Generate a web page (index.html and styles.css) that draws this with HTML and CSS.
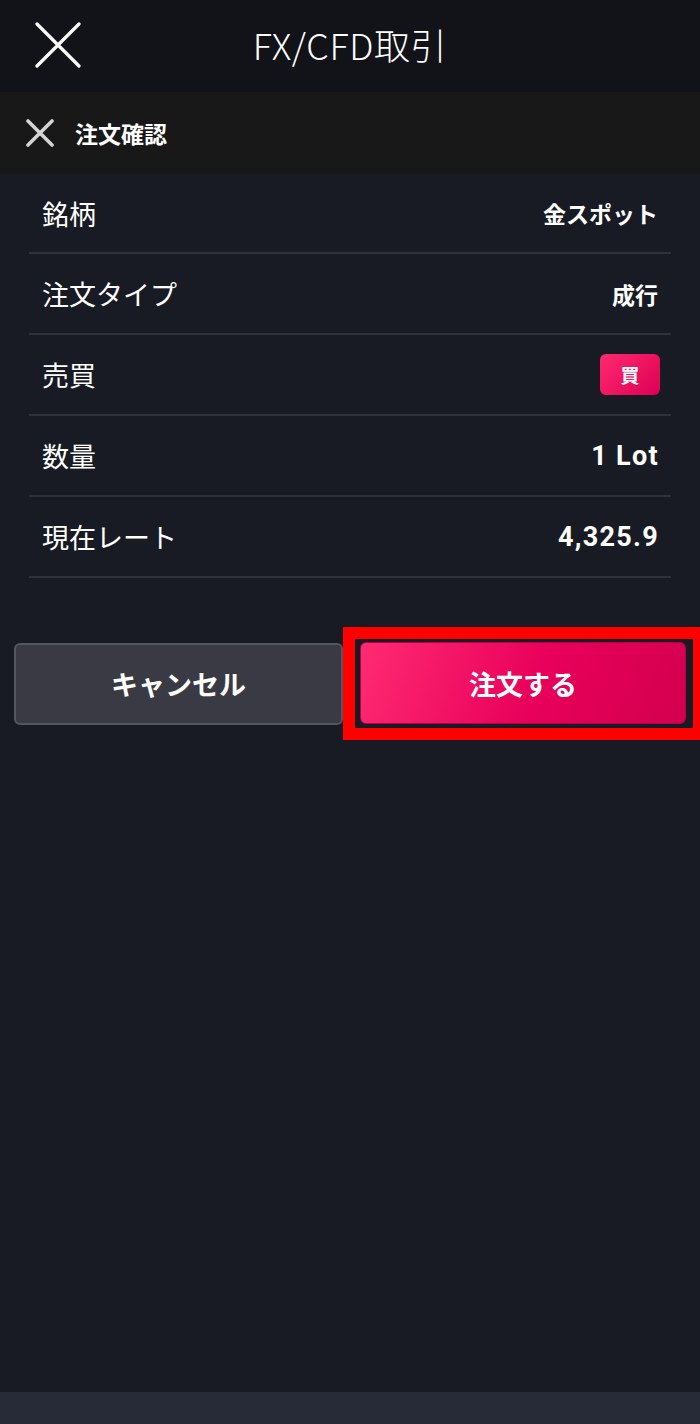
FILE: index.html
```html
<!DOCTYPE html>
<html lang="ja">
<head>
    <meta charset="UTF-8">
    <meta name="viewport" content="width=device-width, initial-scale=1.0">
    <title>FX/CFD取引</title>
    <link rel="stylesheet" href="styles.css">
</head>
<body>
    <div class="app">
        <header class="top-bar">
            <button class="close-btn" aria-label="閉じる">
                <svg width="46" height="46" viewBox="0 0 46 46">
                    <path d="M2 2 L44 44 M44 2 L2 44" stroke="#ffffff" stroke-width="3.2" stroke-linecap="round"/>
                </svg>
            </button>
            <div class="top-title">FX/CFD取引</div>
        </header>

        <div class="sub-bar">
            <svg width="28" height="28" viewBox="0 0 28 28">
                <path d="M2 2 L26 26 M26 2 L2 26" stroke="#d4d4d4" stroke-width="3.6" stroke-linecap="round"/>
            </svg>
            <span class="sub-title">注文確認</span>
        </div>

        <div class="detail-list">
            <div class="detail-row">
                <span class="label">銘柄</span>
                <span class="value">金スポット</span>
            </div>
            <div class="detail-row">
                <span class="label">注文タイプ</span>
                <span class="value">成行</span>
            </div>
            <div class="detail-row">
                <span class="label">売買</span>
                <span class="buy-badge">買</span>
            </div>
            <div class="detail-row">
                <span class="label">数量</span>
                <span class="value num">1 Lot</span>
            </div>
            <div class="detail-row">
                <span class="label">現在レート</span>
                <span class="value num">4,325.9</span>
            </div>
        </div>

        <div class="actions">
            <button class="cancel-btn">キャンセル</button>
            <div class="highlight">
                <button class="order-btn">注文する</button>
            </div>
        </div>

        <div class="spacer"></div>
        <div class="bottom-bar"></div>
    </div>
</body>
</html>
```

FILE: styles.css
```css
/* Base styling */
body {
    margin: 0;
    background-color: #181b23;
    color: #ffffff;
    font-family: "Noto Sans CJK JP", "Noto Sans", sans-serif;
}

.app {
    width: 700px;
    height: 1424px;
    display: flex;
    flex-direction: column;
    overflow: hidden;
}

/* Top bar */
.top-bar {
    height: 92px;
    background-color: #121318;
    display: flex;
    align-items: center;
    position: relative;
}

.close-btn {
    background: none;
    border: none;
    padding: 0;
    margin-left: 35px;
    margin-top: -2px;
    width: 46px;
    height: 46px;
    cursor: pointer;
}

.top-title {
    position: absolute;
    left: 0;
    right: 0;
    text-align: center;
    font-size: 36px;
    font-weight: 300;
    letter-spacing: 0.6px;
    pointer-events: none;
    margin-top: -5px;
}

/* Sub bar */
.sub-bar {
    height: 82px;
    background-color: #181818;
    display: flex;
    align-items: center;
    gap: 21px;
    padding-left: 26px;
}

.sub-title {
    font-size: 23px;
    font-weight: bold;
}

/* Detail rows */
.detail-list {
    padding: 0 29px;
}

.detail-row {
    height: 79px;
    display: flex;
    align-items: center;
    justify-content: space-between;
    padding: 0 13px;
    border-bottom: 2px solid #2e313a;
}

.detail-row:first-child {
    height: 78px;
}

.label {
    font-size: 27px;
    font-weight: 400;
}

.value {
    font-size: 23px;
    font-weight: bold;
}

.value.num {
    font-family: Roboto, "Noto Sans CJK JP", sans-serif;
    font-size: 27px;
    letter-spacing: 1.3px;
    margin-right: -1px;
}

.buy-badge {
    width: 60px;
    height: 41px;
    border-radius: 6px;
    background: linear-gradient(135deg, #ff2a6f, #dc0053);
    display: flex;
    align-items: center;
    justify-content: center;
    font-size: 19px;
    font-weight: bold;
    margin-right: -2px;
}

/* Buttons */
.actions {
    display: flex;
    align-items: center;
    padding-left: 14px;
    margin-top: 49px;
}

.cancel-btn {
    width: 329px;
    height: 82px;
    box-sizing: border-box;
    background-color: #3a3a44;
    border: 2px solid #55565e;
    border-radius: 6px;
    color: #ffffff;
    font-family: "Noto Sans CJK JP", sans-serif;
    font-size: 27px;
    font-weight: bold;
    cursor: pointer;
}

.highlight {
    width: 357px;
    height: 113px;
    box-sizing: border-box;
    border: 12px solid #ff0000;
    border-right-width: 7px;
    padding: 3px 0 0 5px;
    background-color: #181b23;
}

.order-btn {
    width: 326px;
    height: 82px;
    background: linear-gradient(110deg, #ff2a72, #e8005a 55%, #d3004e);
    border: 1px solid #b8004a;
    border-radius: 6px;
    color: #ffffff;
    font-family: "Noto Sans CJK JP", sans-serif;
    font-size: 27px;
    font-weight: bold;
    cursor: pointer;
}

.spacer {
    flex: 1;
}

.bottom-bar {
    height: 32px;
    background-color: #272b37;
}
```
